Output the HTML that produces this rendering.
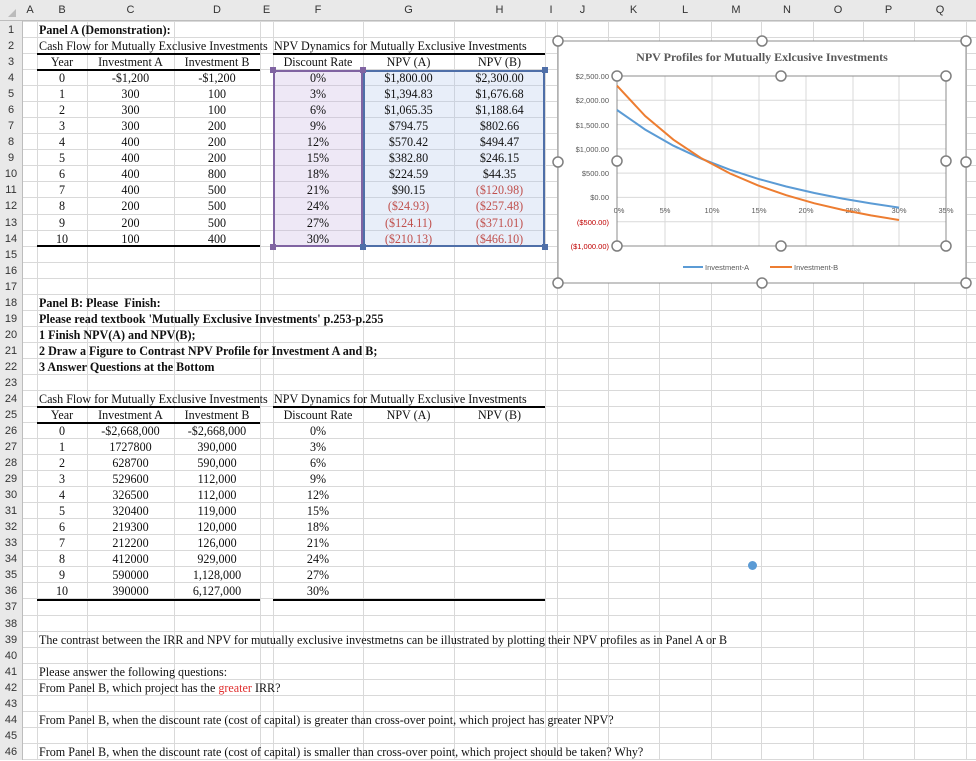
<!DOCTYPE html>
<html><head><meta charset="utf-8"><style>
*{margin:0;padding:0;box-sizing:border-box}
body{width:976px;height:760px;overflow:hidden;background:#fff;position:relative;font-family:"Liberation Serif",serif;font-size:12.1px;color:#111}
.hl{position:absolute;left:0;width:976px;height:1px;background:#d9d9d9}
.vl{position:absolute;top:0;width:1px;height:760px;background:#d9d9d9}
.hdr{position:absolute;left:0;top:0;width:976px;height:21px;background:#e9e9e9;border-bottom:1px solid #bdbdbd}
.hc{position:absolute;top:0;height:21px;line-height:21px;text-align:center;font-family:"Liberation Sans",sans-serif;font-size:11px;color:#333}
.rh{position:absolute;left:0;width:23px;top:21px;height:739px;background:#e9e9e9;border-right:1px solid #bdbdbd}
.rn{position:absolute;left:0;width:22px;height:16px;line-height:16px;text-align:center;font-family:"Liberation Sans",sans-serif;font-size:11px;color:#333}
.row{position:absolute;left:0;width:976px;height:16px}
.c{position:absolute;top:0;height:16px;line-height:17px;text-align:center;white-space:nowrap}
.B{left:37px;width:50px}.C{left:87px;width:87px}.D{left:174px;width:86px}.F{left:273px;width:90px}.G{left:363px;width:91px}.H{left:454px;width:91px}
.L{left:39px;text-align:left}.FL{left:274px;text-align:left}
.bold{font-weight:bold}
.red{color:#c0504d}
.bl{position:absolute;height:2px;background:#000}
</style></head><body>
<div id="grid"></div>
<script>
(function(){
var g=document.getElementById('grid'),h='';
for(var n=1;n<=47;n++){h+='<div class="hl" style="top:'+(21+(n-1)*16.04).toFixed(1)+'px"></div>';}
[37,87,174,260,273,363,454,545,557,608,659,711,761,813,863,914,966].forEach(function(x){h+='<div class="vl" style="left:'+x+'px"></div>';});
g.innerHTML=h;
})();
</script>
<div class="hdr">
<div class="hc" style="left:23px;width:14px">A</div>
<div class="hc" style="left:37px;width:50px">B</div>
<div class="hc" style="left:87px;width:87px">C</div>
<div class="hc" style="left:174px;width:86px">D</div>
<div class="hc" style="left:260px;width:13px">E</div>
<div class="hc" style="left:273px;width:90px">F</div>
<div class="hc" style="left:363px;width:91px">G</div>
<div class="hc" style="left:454px;width:91px">H</div>
<div class="hc" style="left:545px;width:12px">I</div>
<div class="hc" style="left:557px;width:51px">J</div>
<div class="hc" style="left:608px;width:51px">K</div>
<div class="hc" style="left:659px;width:52px">L</div>
<div class="hc" style="left:711px;width:50px">M</div>
<div class="hc" style="left:761px;width:52px">N</div>
<div class="hc" style="left:813px;width:50px">O</div>
<div class="hc" style="left:863px;width:51px">P</div>
<div class="hc" style="left:914px;width:52px">Q</div>
<div style="position:absolute;left:8px;top:9px;width:0;height:0;border-left:8px solid transparent;border-bottom:8px solid #bbb"></div>
</div>
<div class="rh"></div>
<div id="rn"></div>
<script>
(function(){var h='';for(var n=1;n<=46;n++){h+='<div class="rn" style="top:'+(22+(n-1)*16.04).toFixed(1)+'px">'+n+'</div>';}document.getElementById('rn').innerHTML=h;})();
</script>

<div style="position:absolute;left:273px;top:70px;width:90px;height:177px;background:rgba(200,180,225,0.3);border:2px solid #8064a2"></div>
<div style="position:absolute;left:363px;top:70px;width:182px;height:177px;background:rgba(180,200,235,0.3);border:2px solid #4f6fa8"></div>
<div style="position:absolute;left:270px;top:67px;width:6px;height:6px;background:#8064a2"></div>
<div style="position:absolute;left:360px;top:67px;width:6px;height:6px;background:#8064a2"></div>
<div style="position:absolute;left:542px;top:67px;width:6px;height:6px;background:#4f6fa8"></div>
<div style="position:absolute;left:270px;top:244px;width:6px;height:6px;background:#8064a2"></div>
<div style="position:absolute;left:360px;top:244px;width:6px;height:6px;background:#4f6fa8"></div>
<div style="position:absolute;left:542px;top:244px;width:6px;height:6px;background:#4f6fa8"></div>

<div class="bl" style="left:37px;width:223px;top:53px"></div>
<div class="bl" style="left:273px;width:272px;top:53px"></div>
<div class="bl" style="left:37px;width:223px;top:69px"></div>
<div class="bl" style="left:37px;width:223px;top:245px"></div>
<div class="bl" style="left:37px;width:223px;top:406px"></div>
<div class="bl" style="left:273px;width:272px;top:406px"></div>
<div class="bl" style="left:37px;width:223px;top:422px"></div>
<div class="bl" style="left:37px;width:223px;top:599px"></div>
<div class="bl" style="left:273px;width:272px;top:599px"></div>

<div class="row" style="top:22px"><span class="c L bold">Panel A (Demonstration):</span></div>
<div class="row" style="top:38px"><span class="c L">Cash Flow for Mutually Exclusive Investments</span><span class="c FL">NPV Dynamics for Mutually Exclusive Investments</span></div>
<div class="row" style="top:54.1px"><span class="c B">Year</span><span class="c C">Investment A</span><span class="c D">Investment B</span><span class="c F">Discount Rate</span><span class="c G">NPV (A)</span><span class="c H">NPV (B)</span></div>
<div class="row" style="top:70.1px"><span class="c B">0</span><span class="c C">-$1,200</span><span class="c D">-$1,200</span><span class="c F">0%</span><span class="c G">$1,800.00</span><span class="c H">$2,300.00</span></div>
<div class="row" style="top:86.2px"><span class="c B">1</span><span class="c C">300</span><span class="c D">100</span><span class="c F">3%</span><span class="c G">$1,394.83</span><span class="c H">$1,676.68</span></div>
<div class="row" style="top:102.2px"><span class="c B">2</span><span class="c C">300</span><span class="c D">100</span><span class="c F">6%</span><span class="c G">$1,065.35</span><span class="c H">$1,188.64</span></div>
<div class="row" style="top:118.2px"><span class="c B">3</span><span class="c C">300</span><span class="c D">200</span><span class="c F">9%</span><span class="c G">$794.75</span><span class="c H">$802.66</span></div>
<div class="row" style="top:134.3px"><span class="c B">4</span><span class="c C">400</span><span class="c D">200</span><span class="c F">12%</span><span class="c G">$570.42</span><span class="c H">$494.47</span></div>
<div class="row" style="top:150.3px"><span class="c B">5</span><span class="c C">400</span><span class="c D">200</span><span class="c F">15%</span><span class="c G">$382.80</span><span class="c H">$246.15</span></div>
<div class="row" style="top:166.4px"><span class="c B">6</span><span class="c C">400</span><span class="c D">800</span><span class="c F">18%</span><span class="c G">$224.59</span><span class="c H">$44.35</span></div>
<div class="row" style="top:182.4px"><span class="c B">7</span><span class="c C">400</span><span class="c D">500</span><span class="c F">21%</span><span class="c G">$90.15</span><span class="c H red">($120.98)</span></div>
<div class="row" style="top:198.4px"><span class="c B">8</span><span class="c C">200</span><span class="c D">500</span><span class="c F">24%</span><span class="c G red">($24.93)</span><span class="c H red">($257.48)</span></div>
<div class="row" style="top:214.5px"><span class="c B">9</span><span class="c C">200</span><span class="c D">500</span><span class="c F">27%</span><span class="c G red">($124.11)</span><span class="c H red">($371.01)</span></div>
<div class="row" style="top:230.5px"><span class="c B">10</span><span class="c C">100</span><span class="c D">400</span><span class="c F">30%</span><span class="c G red">($210.13)</span><span class="c H red">($466.10)</span></div>

<div class="row" style="top:294.7px"><span class="c L bold">Panel B: Please&nbsp; Finish:</span></div>
<div class="row" style="top:310.7px"><span class="c L bold">Please read textbook 'Mutually Exclusive Investments' p.253-p.255</span></div>
<div class="row" style="top:326.8px"><span class="c L bold">1 Finish NPV(A) and NPV(B);</span></div>
<div class="row" style="top:342.8px"><span class="c L bold">2 Draw a Figure to Contrast NPV Profile for Investment A and B;</span></div>
<div class="row" style="top:358.8px"><span class="c L bold">3 Answer Questions at the Bottom</span></div>

<div class="row" style="top:390.9px"><span class="c L">Cash Flow for Mutually Exclusive Investments</span><span class="c FL">NPV Dynamics for Mutually Exclusive Investments</span></div>
<div class="row" style="top:407px"><span class="c B">Year</span><span class="c C">Investment A</span><span class="c D">Investment B</span><span class="c F">Discount Rate</span><span class="c G">NPV (A)</span><span class="c H">NPV (B)</span></div>
<div class="row" style="top:423px"><span class="c B">0</span><span class="c C">-$2,668,000</span><span class="c D">-$2,668,000</span><span class="c F">0%</span></div>
<div class="row" style="top:439px"><span class="c B">1</span><span class="c C">1727800</span><span class="c D">390,000</span><span class="c F">3%</span></div>
<div class="row" style="top:455.1px"><span class="c B">2</span><span class="c C">628700</span><span class="c D">590,000</span><span class="c F">6%</span></div>
<div class="row" style="top:471.1px"><span class="c B">3</span><span class="c C">529600</span><span class="c D">112,000</span><span class="c F">9%</span></div>
<div class="row" style="top:487.2px"><span class="c B">4</span><span class="c C">326500</span><span class="c D">112,000</span><span class="c F">12%</span></div>
<div class="row" style="top:503.2px"><span class="c B">5</span><span class="c C">320400</span><span class="c D">119,000</span><span class="c F">15%</span></div>
<div class="row" style="top:519.2px"><span class="c B">6</span><span class="c C">219300</span><span class="c D">120,000</span><span class="c F">18%</span></div>
<div class="row" style="top:535.3px"><span class="c B">7</span><span class="c C">212200</span><span class="c D">126,000</span><span class="c F">21%</span></div>
<div class="row" style="top:551.3px"><span class="c B">8</span><span class="c C">412000</span><span class="c D">929,000</span><span class="c F">24%</span></div>
<div class="row" style="top:567.4px"><span class="c B">9</span><span class="c C">590000</span><span class="c D">1,128,000</span><span class="c F">27%</span></div>
<div class="row" style="top:583.4px"><span class="c B">10</span><span class="c C">390000</span><span class="c D">6,127,000</span><span class="c F">30%</span></div>

<div class="row" style="top:631.5px"><span class="c L">The contrast between the IRR and NPV for mutually exclusive investmetns can be illustrated by plotting their NPV profiles as in Panel A or B</span></div>
<div class="row" style="top:663.6px"><span class="c L">Please answer the following questions:</span></div>
<div class="row" style="top:679.6px"><span class="c L">From Panel B, which project has the <span style="color:#e03030">greater</span> IRR?</span></div>
<div class="row" style="top:711.7px"><span class="c L">From Panel B, when the discount rate (cost of capital) is greater than cross-over point, which project has greater NPV?</span></div>
<div class="row" style="top:743.8px"><span class="c L">From Panel B, when the discount rate (cost of capital) is smaller than cross-over point, which project should be taken? Why?</span></div>

<div style="position:absolute;left:748px;top:561px;width:9px;height:9px;border-radius:50%;background:#5b9bd5"></div>

<svg style="position:absolute;left:0;top:0" width="976" height="760" viewBox="0 0 976 760">
<rect x="558" y="41" width="408" height="242" fill="#fff" stroke="#8c8c8c" stroke-width="1"/>
<text x="762" y="61" text-anchor="middle" font-family="Liberation Serif,serif" font-weight="bold" font-size="12" fill="#595959">NPV Profiles for Mutually Exlcusive Investments</text>
<g stroke="#d9d9d9" stroke-width="1">
<line x1="617" y1="100.3" x2="946" y2="100.3"/><line x1="617" y1="124.6" x2="946" y2="124.6"/><line x1="617" y1="148.9" x2="946" y2="148.9"/><line x1="617" y1="173.1" x2="946" y2="173.1"/><line x1="617" y1="197.4" x2="946" y2="197.4"/><line x1="617" y1="221.7" x2="946" y2="221.7"/>
<line x1="665" y1="76" x2="665" y2="246"/><line x1="712" y1="76" x2="712" y2="246"/><line x1="759" y1="76" x2="759" y2="246"/><line x1="806" y1="76" x2="806" y2="246"/><line x1="853" y1="76" x2="853" y2="246"/><line x1="899" y1="76" x2="899" y2="246"/>
</g>
<rect x="617" y="76" width="329" height="170" fill="none" stroke="#8c8c8c" stroke-width="1"/>
<g font-family="Liberation Sans,sans-serif" font-size="7.5" fill="#595959" text-anchor="end">
<text x="609" y="79">$2,500.00</text><text x="609" y="103">$2,000.00</text><text x="609" y="128">$1,500.00</text><text x="609" y="152">$1,000.00</text><text x="609" y="176">$500.00</text><text x="609" y="200">$0.00</text>
<text x="609" y="225" fill="#c00000">($500.00)</text><text x="609" y="249" fill="#c00000">($1,000.00)</text>
</g>
<g font-family="Liberation Sans,sans-serif" font-size="7.5" fill="#595959" text-anchor="middle">
<text x="619" y="213">0%</text><text x="665" y="213">5%</text><text x="712" y="213">10%</text><text x="759" y="213">15%</text><text x="806" y="213">20%</text><text x="853" y="213">25%</text><text x="899" y="213">30%</text><text x="946" y="213">35%</text>
</g>
<polyline fill="none" stroke="#5b9bd5" stroke-width="2" points="617,110 645.2,129.6 673.4,145.7 701.6,158.8 729.8,169.7 758,178.8 786.2,186.5 814.4,193 842.6,198.6 870.8,203.4 899,207.6"/>
<polyline fill="none" stroke="#ed7d31" stroke-width="2" points="617,85.7 645.2,116 673.4,139.7 701.6,158.4 729.8,173.4 758,185.4 786.2,195.2 814.4,203.3 842.6,209.9 870.8,215.4 899,220"/>
<line x1="683" y1="267" x2="703" y2="267" stroke="#5b9bd5" stroke-width="2"/>
<text x="705" y="270" font-family="Liberation Sans,sans-serif" font-size="7.5" fill="#595959">Investment-A</text>
<line x1="770" y1="267" x2="792" y2="267" stroke="#ed7d31" stroke-width="2"/>
<text x="794" y="270" font-family="Liberation Sans,sans-serif" font-size="7.5" fill="#595959">Investment-B</text>
<g fill="#fff" stroke="#7f7f7f" stroke-width="1.5">
<circle cx="558" cy="41" r="5"/><circle cx="762" cy="41" r="5"/><circle cx="966" cy="41" r="5"/><circle cx="558" cy="162" r="5"/><circle cx="966" cy="162" r="5"/><circle cx="558" cy="283" r="5"/><circle cx="762" cy="283" r="5"/><circle cx="966" cy="283" r="5"/>
<circle cx="617" cy="76" r="5"/><circle cx="781" cy="76" r="5"/><circle cx="946" cy="76" r="5"/><circle cx="617" cy="161" r="5"/><circle cx="946" cy="161" r="5"/><circle cx="617" cy="246" r="5"/><circle cx="781" cy="246" r="5"/><circle cx="946" cy="246" r="5"/>
</g>
</svg>
</body></html>
